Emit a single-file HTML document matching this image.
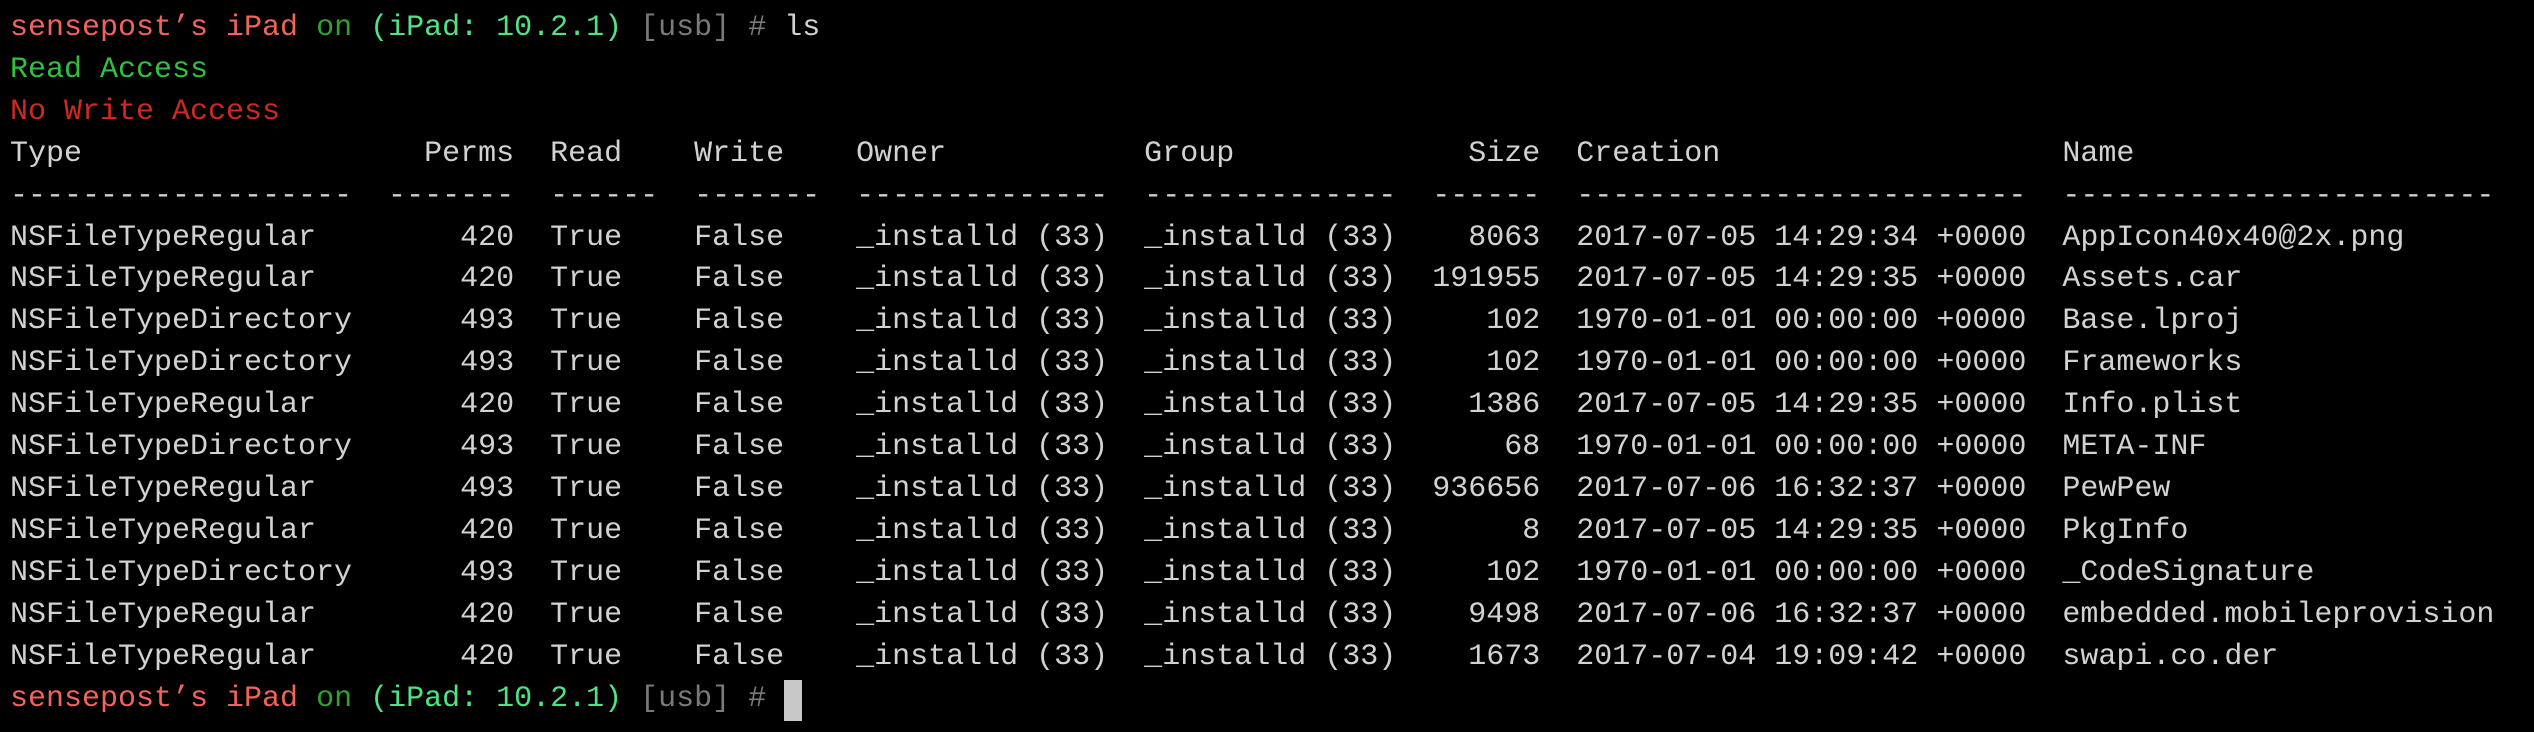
<!DOCTYPE html>
<html><head><meta charset="utf-8"><style>
html,body{margin:0;padding:0;background:#000;width:2534px;height:732px;overflow:hidden}
pre{margin:0;position:absolute;left:10px;top:8px;font-family:"Liberation Mono","DejaVu Sans Mono",monospace;font-size:30px;line-height:41.9px;color:#d2d2d2;letter-spacing:0}
.r{color:#f2625e}.dg{color:#2fa32f}.g{color:#4fe386}.u{color:#7a7a7a}.ga{color:#2fc23c}.ra{color:#d0281e}
.cur{display:inline-block;width:18px;height:41px;background:#c8c8c8;vertical-align:top;margin-top:1px}
</style></head><body><pre><span class="r">sensepost’s iPad</span> <span class="dg">on</span> <span class="g">(iPad: 10.2.1)</span> <span class="u">[usb]</span> <span class="u">#</span> ls
<span class="ga">Read Access</span>
<span class="ra">No Write Access</span>
Type                   Perms  Read    Write    Owner           Group             Size  Creation                   Name
-------------------  -------  ------  -------  --------------  --------------  ------  -------------------------  ------------------------
NSFileTypeRegular        420  True    False    _installd (33)  _installd (33)    8063  2017-07-05 14:29:34 +0000  AppIcon40x40@2x.png
NSFileTypeRegular        420  True    False    _installd (33)  _installd (33)  191955  2017-07-05 14:29:35 +0000  Assets.car
NSFileTypeDirectory      493  True    False    _installd (33)  _installd (33)     102  1970-01-01 00:00:00 +0000  Base.lproj
NSFileTypeDirectory      493  True    False    _installd (33)  _installd (33)     102  1970-01-01 00:00:00 +0000  Frameworks
NSFileTypeRegular        420  True    False    _installd (33)  _installd (33)    1386  2017-07-05 14:29:35 +0000  Info.plist
NSFileTypeDirectory      493  True    False    _installd (33)  _installd (33)      68  1970-01-01 00:00:00 +0000  META-INF
NSFileTypeRegular        493  True    False    _installd (33)  _installd (33)  936656  2017-07-06 16:32:37 +0000  PewPew
NSFileTypeRegular        420  True    False    _installd (33)  _installd (33)       8  2017-07-05 14:29:35 +0000  PkgInfo
NSFileTypeDirectory      493  True    False    _installd (33)  _installd (33)     102  1970-01-01 00:00:00 +0000  _CodeSignature
NSFileTypeRegular        420  True    False    _installd (33)  _installd (33)    9498  2017-07-06 16:32:37 +0000  embedded.mobileprovision
NSFileTypeRegular        420  True    False    _installd (33)  _installd (33)    1673  2017-07-04 19:09:42 +0000  swapi.co.der
<span class="r">sensepost’s iPad</span> <span class="dg">on</span> <span class="g">(iPad: 10.2.1)</span> <span class="u">[usb] #</span> <span class="cur"></span></pre></body></html>
